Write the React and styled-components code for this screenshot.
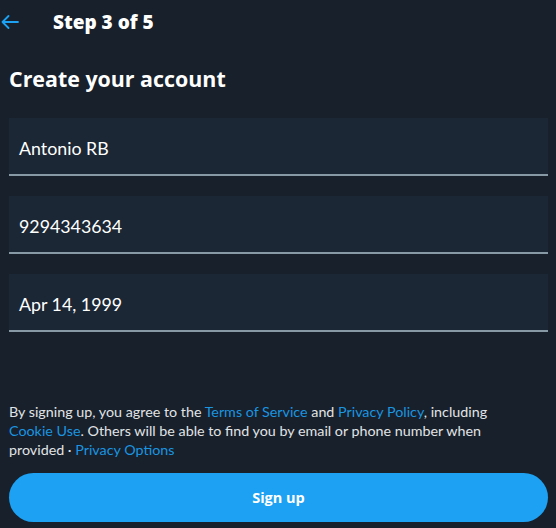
import React from "react";
import styled, { createGlobalStyle } from "styled-components";

const Global = createGlobalStyle`
  html, body { margin: 0; padding: 0; background: #15202b; }
  body { font-family: Lato, "Open Sans", sans-serif; }
  * { box-sizing: border-box; }
`;

const Page = styled.div`
  width: 556px;
  height: 528px;
  background: #17202b;
  display: flex;
  flex-direction: column;
  padding: 0 8px 6px 9px;
  color: #fff;
`;

const Header = styled.div`
  height: 43px;
  display: flex;
  align-items: center;
  margin-left: -9px;
`;

const BackButton = styled.button`
  width: 53px;
  height: 43px;
  background: none;
  border: none;
  padding: 0 0 0 1px;
  display: flex;
  align-items: center;
  color: #1da1f2;
  cursor: pointer;
`;

const StepTitle = styled.h2`
  margin: 0;
  font-family: "Open Sans", sans-serif;
  font-size: 19px;
  font-weight: 800;
`;

const Title = styled.h1`
  margin: 22px 0 0;
  font-family: "Open Sans", sans-serif;
  font-size: 21.4px;
  font-weight: 700;
  line-height: 28px;
`;

const Fields = styled.div`
  margin-top: 25px;
  display: flex;
  flex-direction: column;
  gap: 20px;
`;

const Field = styled.div`
  height: 58px;
  background: #1b2735;
  border-bottom: 2px solid #8899a6;
  display: flex;
  align-items: center;
  padding: 3px 10px 0;
  font-size: 17.8px;
  color: #fff;
`;

const Spacer = styled.div`
  flex: 1;
`;

const Terms = styled.p`
  margin: 0 0 14px;
  max-width: 500px;
  font-size: 14.3px;
  line-height: 19px;
  color: #e1e4e6;
`;

const Link = styled.a`
  color: #1b95e0;
  text-decoration: none;
`;

const SignUp = styled.button`
  height: 49px;
  width: 100%;
  border: none;
  border-radius: 9999px;
  background: #1da1f2;
  color: #fff;
  font-family: "Open Sans", sans-serif;
  font-size: 14.5px;
  font-weight: 700;
  cursor: pointer;
`;

export default function App() {
  return (
    <>
      <Global />
      <Page>
        <Header>
          <BackButton aria-label="Back">
            <svg width="18" height="14" viewBox="0 0 18 14" fill="none" stroke="currentColor" strokeWidth="1.8" strokeLinecap="round" strokeLinejoin="round">
              <path d="M17 7H1.5M7.5 1L1.5 7l6 6" />
            </svg>
          </BackButton>
          <StepTitle>Step 3 of 5</StepTitle>
        </Header>
        <Title>Create your account</Title>
        <Fields>
          <Field>Antonio RB</Field>
          <Field>9294343634</Field>
          <Field>Apr 14, 1999</Field>
        </Fields>
        <Spacer />
        <Terms>
          By signing up, you agree to the <Link href="#">Terms of Service</Link> and{" "}
          <Link href="#">Privacy Policy</Link>, including <Link href="#">Cookie Use</Link>. Others will be able
          to find you by email or phone number when provided · <Link href="#">Privacy Options</Link>
        </Terms>
        <SignUp>Sign up</SignUp>
      </Page>
    </>
  );
}
